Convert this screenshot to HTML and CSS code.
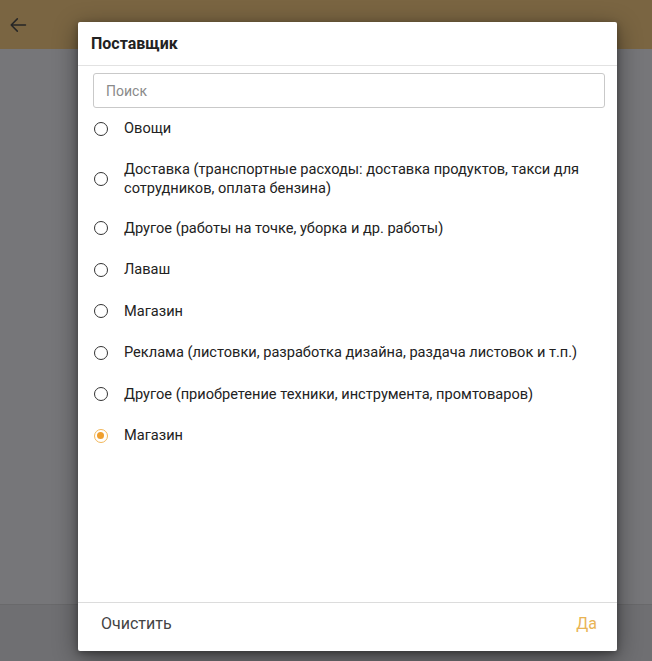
FILE: index.html
```html
<!DOCTYPE html>
<html lang="ru">
<head>
<meta charset="utf-8">
<link rel="stylesheet" href="styles.css">
</head>
<body>
<div class="page">
  <header class="topbar">
    <svg class="back" width="20" height="20" viewBox="0 0 20 20"><path d="M17.5 10H3.2M9.3 3.9L3.2 10l6.1 6.1" fill="none" stroke="#262626" stroke-width="1.5" stroke-linecap="round" stroke-linejoin="round"/></svg>
  </header>
  <main class="content"></main>
  <footer class="bottombar"></footer>

  <div class="dialog">
    <div class="dlg-head">Поставщик</div>
    <div class="dlg-body">
      <div class="search"><span class="placeholder">Поиск</span></div>
      <ul class="list">
        <li class="item"><span class="radio"></span><span class="label">Овощи</span></li>
        <li class="item"><span class="radio"></span><span class="label">Доставка (транспортные расходы: доставка продуктов, такси для сотрудников, оплата бензина)</span></li>
        <li class="item"><span class="radio"></span><span class="label">Другое (работы на точке, уборка и др. работы)</span></li>
        <li class="item"><span class="radio"></span><span class="label">Лаваш</span></li>
        <li class="item"><span class="radio"></span><span class="label">Магазин</span></li>
        <li class="item"><span class="radio"></span><span class="label">Реклама (листовки, разработка дизайна, раздача листовок и т.п.)</span></li>
        <li class="item"><span class="radio"></span><span class="label">Другое (приобретение техники, инструмента, промтоваров)</span></li>
        <li class="item"><span class="radio checked"></span><span class="label">Магазин</span></li>
      </ul>
    </div>
    <div class="dlg-foot">
      <span class="btn btn-clear">Очистить</span>
      <span class="btn btn-ok">Да</span>
    </div>
  </div>
</div>
</body>
</html>
```
FILE: styles.css
```css
* { box-sizing: border-box; }
html, body { margin: 0; padding: 0; }
body {
  font-family: Roboto, "Noto Sans", sans-serif;
  background: #767679;
}
.page {
  position: relative;
  width: 652px;
  height: 661px;
  display: flex;
  flex-direction: column;
  overflow: hidden;
}
.topbar {
  height: 49px;
  background: #7a6542;
  display: flex;
  align-items: center;
  padding-left: 8px;
  box-shadow: 0 1px 3px rgba(0,0,0,0.25);
}
.back { display: block; }
.content {
  flex: 1;
  background: #767679;
}
.bottombar {
  height: 57px;
  background: #6f6f72;
  border-top: 1px solid #69696b;
}
.dialog {
  position: absolute;
  left: 78px;
  top: 22px;
  width: 539px;
  height: 629px;
  background: #fff;
  border-radius: 2px;
  box-shadow: 0 6px 24px rgba(0,0,0,0.45), 0 2px 6px rgba(0,0,0,0.3);
  display: flex;
  flex-direction: column;
}
.dlg-head {
  height: 44px;
  padding: 0 13px;
  display: flex;
  align-items: center;
  font-size: 16px;
  font-weight: 700;
  color: #222;
  border-bottom: 1px solid #e2e2e2;
}
.dlg-body {
  flex: 1;
  padding: 7px 13px 0 15px;
  overflow: hidden;
}
.search {
  height: 35px;
  border: 1px solid #c9c9c9;
  border-radius: 3px;
  display: flex;
  align-items: center;
  padding-left: 12px;
  margin-right: -1px;
}
.placeholder {
  font-size: 14px;
  color: #8a8a8a;
}
.list {
  list-style: none;
  margin: 0;
  padding: 0;
}
.item {
  min-height: 41.5px;
  padding: 10px 0;
  display: flex;
  align-items: center;
  gap: 16px;
  padding-left: 1px;
}
.radio {
  flex: none;
  width: 14px;
  height: 14px;
  border: 1.5px solid #333;
  border-radius: 50%;
  position: relative;
}
.radio.checked {
  border-color: #f2b75a;
}
.radio.checked::after {
  content: "";
  position: absolute;
  left: 2px;
  top: 2px;
  width: 7px;
  height: 7px;
  border-radius: 50%;
  background: #ef9f2e;
}
.label {
  font-size: 14.6px;
  line-height: 19px;
  color: #222;
  padding-right: 8px;
}
.dlg-foot {
  height: 49px;
  border-top: 1px solid #dcdcdc;
  display: flex;
  align-items: center;
  justify-content: space-between;
  padding: 0 20px 7px 23px;
}
.btn {
  font-size: 16px;
}
.btn-clear { color: #444; }
.btn-ok { color: #e9b455; }
```
